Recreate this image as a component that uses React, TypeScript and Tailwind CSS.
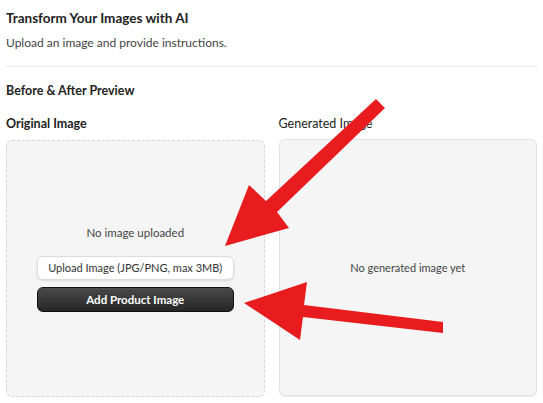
import React from 'react';

function Arrows() {
  return (
    <svg
      className="absolute inset-0 pointer-events-none"
      width="543"
      height="403"
      viewBox="0 0 543 403"
    >
      <polygon
        fill="#e81c1f"
        points="225,246 249,185 266,201 376,99 385,108 277,212 289,228"
      />
      <polygon
        fill="#e81c1f"
        points="244,303 307,282 304,305 443,322 443,333 303,317 300,340"
      />
    </svg>
  );
}

export default function App() {
  return (
    <div className="relative w-[543px] h-[403px] bg-white overflow-hidden font-['Lato',sans-serif] text-[#222]">
      <div className="px-[6px] pt-[8px]">
        <h2 className="text-[13.5px] leading-[20px] font-bold">Transform Your Images with AI</h2>
        <p className="mt-[5px] text-[12px] leading-[20px] text-[#444]">
          Upload an image and provide instructions.
        </p>
        <div className="mt-[13px] border-t border-[#e6e6e6]" />
        <h3 className="mt-[14px] text-[12.5px] leading-[20px] font-bold">Before &amp; After Preview</h3>

        <div className="mt-[13px] grid grid-cols-2 gap-[14px]">
          <div className="flex flex-col">
            <div className="text-[12.5px] leading-[20px] font-bold">Original Image</div>
            <div className="mt-[6px] h-[257px] rounded-md border border-dashed border-[#d6d6d6] bg-[#f5f5f5] flex flex-col items-center justify-center">
              <div className="text-[11.5px] leading-[16px] text-[#444]">No image uploaded</div>
              <button className="mt-[15px] w-[197px] h-[24px] rounded-md border border-[#dcdcdc] bg-white text-[11px] text-[#333] shadow-sm">
                Upload Image (JPG/PNG, max 3MB)
              </button>
              <button className="mt-[7px] w-[197px] h-[25px] rounded-md border border-[#111] bg-gradient-to-b from-[#4a4a4a] to-[#262626] text-[11.5px] font-bold text-white">
                Add Product Image
              </button>
            </div>
          </div>
          <div className="flex flex-col">
            <div className="text-[12.5px] leading-[20px]">Generated Image</div>
            <div className="mt-[5px] h-[257px] rounded-md border border-[#e2e2e2] bg-[#f5f5f5] shadow-[0_1px_1px_rgba(0,0,0,0.08)] flex items-center justify-center">
              <div className="text-[11px] leading-[16px] text-[#444]">No generated image yet</div>
            </div>
          </div>
        </div>
      </div>
      <Arrows />
    </div>
  );
}
